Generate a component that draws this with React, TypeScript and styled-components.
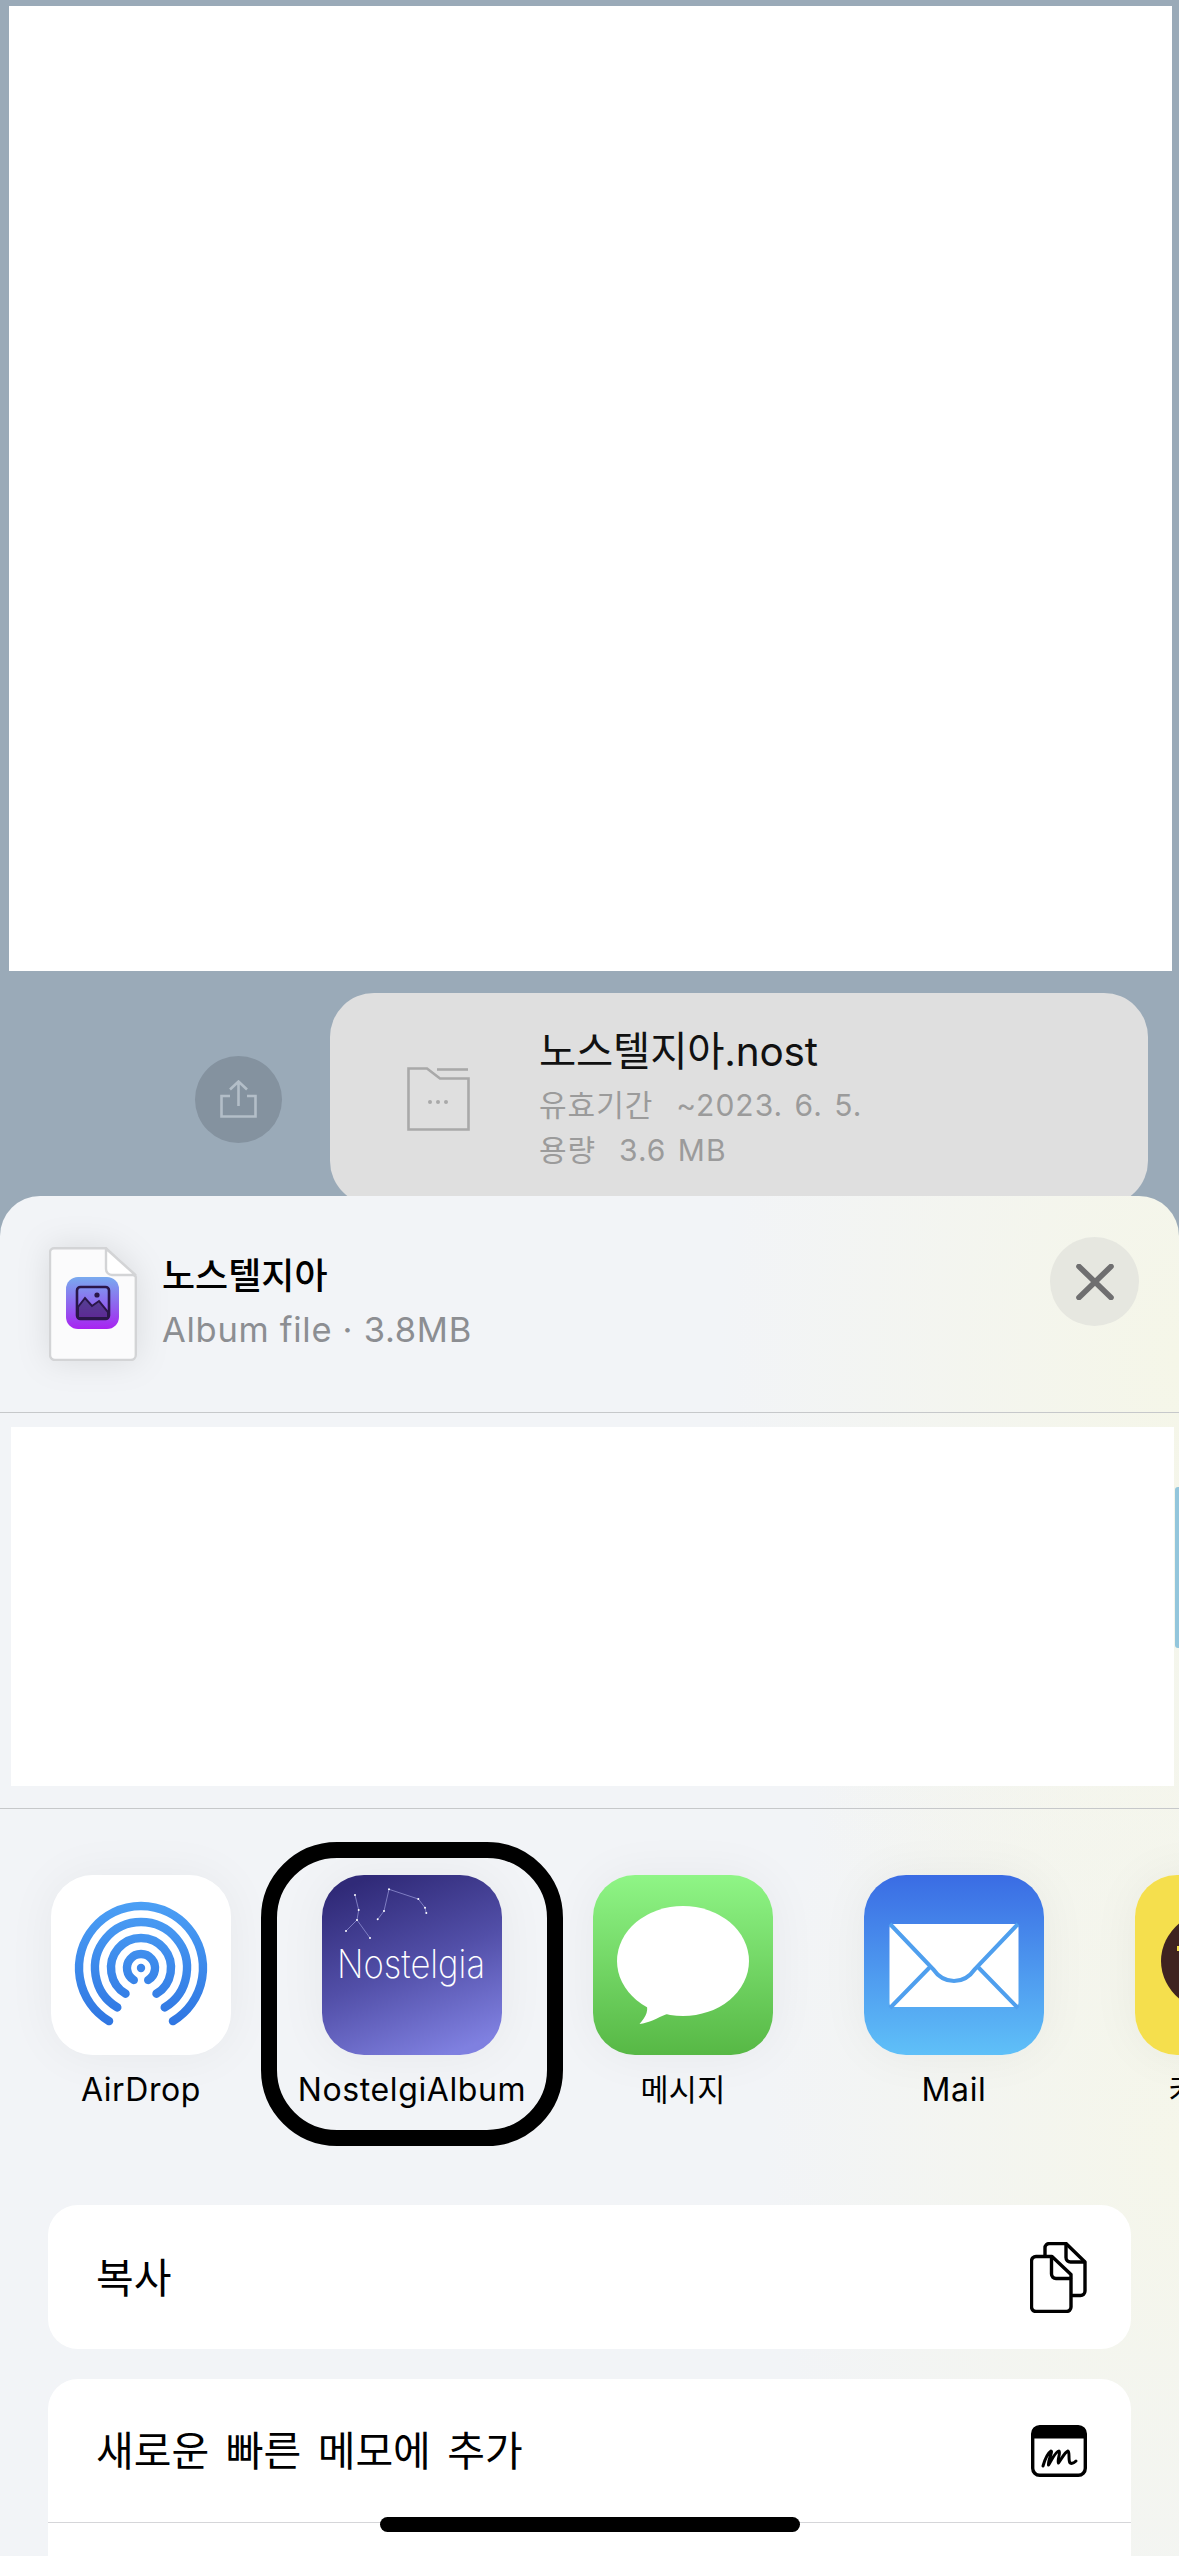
import React from "react";
import styled, { createGlobalStyle } from "styled-components";

const FONT = `"Inter", "Noto Sans CJK KR", "Noto Sans", sans-serif`;

const Global = createGlobalStyle`
  html, body { margin: 0; padding: 0; background: #9aaab8; }
  * { box-sizing: border-box; }
`;

const Screen = styled.div`
  position: relative;
  width: 1179px;
  height: 2556px;
  overflow: hidden;
  background: #9aaab8;
  font-family: ${FONT};
`;

const Chat = styled.section`
  height: 1196px;
  padding: 6px 7px 0 9px;
  overflow: hidden;
`;

const Preview = styled.div`
  height: 965px;
  background: #ffffff;
`;

const MessageRow = styled.div`
  display: flex;
  align-items: center;
  margin-top: 22px;
  padding: 0 24px 0 186px;
  gap: 48px;
`;

const ShareCircle = styled.div`
  flex: none;
  width: 87px;
  height: 87px;
  border-radius: 50%;
  background: #84929f;
  display: flex;
  align-items: center;
  justify-content: center;
`;

const FileBubble = styled.div`
  flex: 1;
  height: 212px;
  border-radius: 44px;
  background: #dfdfdf;
  display: flex;
  padding: 36px 0 0 77px;
  gap: 69px;
`;

const FileGlyph = styled.svg`
  flex: none;
  margin-top: 38px;
`;

const FileMeta = styled.div`
  display: flex;
  flex-direction: column;
`;

const FileName = styled.div`
  font-size: 40.5px;
  line-height: 46px;
  color: #111;
  letter-spacing: -0.2px;
  margin-bottom: 8px;
`;

const FileSub = styled.div`
  font-size: 30px;
  line-height: 45px;
  color: #9b9b9b;
  white-space: pre;
  letter-spacing: 1px;
  word-spacing: 2px;
`;

const Sheet = styled.section`
  position: relative;
  height: 1360px;
  border-radius: 40px 40px 0 0;
  overflow: hidden;
  background:
    radial-gradient(ellipse 460px 800px at 100% 12%, #f5f6e8 0%, rgba(245, 246, 232, 0) 100%),
    radial-gradient(ellipse 420px 700px at 100% 70%, #f5f6ea 0%, rgba(245, 246, 234, 0) 100%),
    #f2f4f7;
`;

const SheetHeader = styled.header`
  height: 217px;
  display: flex;
  align-items: flex-start;
  padding: 41px 40px 0 49px;
  border-bottom: 1px solid #c6c8ca;
`;

const DocIcon = styled.svg`
  flex: none;
  margin-top: 10px;
  filter: drop-shadow(0 0 16px rgba(0, 0, 0, 0.1));
`;

const HeaderText = styled.div`
  flex: 1;
  margin-left: 25px;
  padding-top: 16px;
`;

const SheetTitle = styled.div`
  font-size: 36px;
  line-height: 46px;
  font-weight: 500;
  color: #000;
`;

const SheetSub = styled.div`
  font-size: 34.5px;
  line-height: 44px;
  letter-spacing: 0.7px;
  color: #8c8e92;
  margin-top: 9px;
`;

const CloseButton = styled.div`
  flex: none;
  width: 89px;
  height: 89px;
  border-radius: 50%;
  background: #e6e7e0;
  display: flex;
  align-items: center;
  justify-content: center;
`;

const PeopleArea = styled.div`
  position: relative;
  height: 396px;
  padding: 14px 5px 0 11px;
  border-bottom: 1px solid #c6c8ca;
`;

const PeopleBlank = styled.div`
  height: 359px;
  background: #ffffff;
`;

const ScrollThumb = styled.div`
  position: absolute;
  top: 74px;
  right: 0;
  width: 4px;
  height: 161px;
  border-radius: 3px 0 0 3px;
  background: #93c6dc;
`;

const AppRow = styled.div`
  display: flex;
  gap: 91px;
  padding: 66px 0 0 51px;
  height: 396px;
`;

const AppItem = styled.div`
  position: relative;
  flex: none;
  width: 180px;
  display: flex;
  flex-direction: column;
  align-items: center;
`;

const AppIcon = styled.svg`
  display: block;
  flex: none;
  border-radius: 42px;
  box-shadow: 0 0 50px rgba(0, 0, 0, 0.05);
`;

const AppLabel = styled.div<{ $hangul?: boolean }>`
  font-size: ${(p) => (p.$hangul ? "30.5px" : "32px")};
  letter-spacing: ${(p) => (p.$hangul ? "0.2px" : "0.6px")};
  line-height: 40px;
  margin-top: 15px;
  color: #000;
  white-space: nowrap;
`;

const FocusRing = styled.div`
  position: absolute;
  top: -33px;
  left: -61px;
  width: 302px;
  height: 304px;
  border: 16px solid #000;
  border-radius: 76px;
  pointer-events: none;
`;

const ActionGroup = styled.div`
  margin: 0 48px 30px;
  border-radius: 30px;
  background: #ffffff;
  overflow: hidden;
`;

const ActionRow = styled.div<{ $height: number }>`
  height: ${(p) => p.$height}px;
  display: flex;
  align-items: center;
  justify-content: space-between;
  padding: 0 44px 5px 48px;
  font-size: 41px;
  color: #000;
  word-spacing: 5px;
  & + & {
    border-top: 1px solid #d5d6d9;
  }
`;

const GlyphSlot = styled.span`
  display: flex;
  margin-top: 5px;
`;

const HomeBar = styled.div`
  position: absolute;
  left: 380px;
  bottom: 24px;
  width: 420px;
  height: 15px;
  border-radius: 8px;
  background: #000;
`;

const ShareGlyph = () => (
  <svg width="37" height="38" viewBox="0 0 37 38" fill="none" stroke="#b3bec8" strokeWidth="2.6">
    <path d="M18.5 26V2M10 9.5 18.5 1.5 27 9.5" />
    <path d="M10 16H1.5V36.5H35.5V16H27" />
  </svg>
);

const FolderGlyph = () => (
  <FileGlyph width="63" height="64" viewBox="0 0 63 64" fill="none" stroke="#a9a9a9" strokeWidth="2.6">
    <path d="M1.5 62.5V1.5H20L33 11.5H61.5V62.5Z" />
    <path d="M30 2.5H61" />
    <circle cx="23" cy="35" r="2" fill="#a9a9a9" stroke="none" />
    <circle cx="31" cy="35" r="2" fill="#a9a9a9" stroke="none" />
    <circle cx="39" cy="35" r="2" fill="#a9a9a9" stroke="none" />
  </FileGlyph>
);

const AlbumDoc = () => (
  <DocIcon width="88" height="114" viewBox="0 0 88 114" fill="none">
    <defs>
      <linearGradient id="docApp" x1="0" y1="0" x2="0" y2="1">
        <stop offset="0" stopColor="#79aaef" />
        <stop offset="0.55" stopColor="#8f63ee" />
        <stop offset="1" stopColor="#a823f1" />
      </linearGradient>
    </defs>
    <path d="M5 1.2H57L86.8 30V108a5 5 0 0 1-5 5H6a5 5 0 0 1-5-5V5a4 4 0 0 1 4-3.8Z" fill="#fbfbfc" stroke="#d3d4d6" strokeWidth="2.4" />
    <path d="M57 1.5V22a6 6 0 0 0 6 6H86.5Z" fill="#ffffff" stroke="#d3d4d6" strokeWidth="2.4" strokeLinejoin="round" />
    <rect x="17" y="30" width="53" height="52" rx="12" fill="url(#docApp)" />
    <rect x="28" y="40" width="32" height="32" rx="3.5" stroke="#2a1648" strokeWidth="2.6" />
    <path d="M29 60 36 51 43 59 50 54 59 65V71H29Z" fill="#2a1648" fillOpacity="0.55" stroke="#2a1648" strokeWidth="2" />
    <circle cx="48" cy="48" r="2.6" fill="#2a1648" />
  </DocIcon>
);

const CloseGlyph = () => (
  <svg width="38" height="36" viewBox="0 0 38 36" fill="none" stroke="#6f6f70" strokeWidth="5.6" strokeLinecap="round">
    <path d="M3 2.5 35 33.5M35 2.5 3 33.5" />
  </svg>
);

const rings = [62, 46, 30, 14];

const AirDropIcon = () => (
  <AppIcon width="180" height="180" viewBox="0 0 180 180">
    <defs>
      <linearGradient id="airStroke" gradientUnits="userSpaceOnUse" x1="90" y1="27" x2="90" y2="150">
        <stop offset="0" stopColor="#4b9ff5" />
        <stop offset="1" stopColor="#2f76e2" />
      </linearGradient>
    </defs>
    <rect width="180" height="180" fill="#ffffff" />
    {rings.map((r) => (
      <path
        key={r}
        d={`M${90 - r * 0.515} ${93 + r * 0.857}A${r} ${r} 0 1 1 ${90 + r * 0.515} ${93 + r * 0.857}`}
        fill="none"
        stroke="url(#airStroke)"
        strokeWidth="8.4"
        strokeLinecap="round"
      />
    ))}
    <circle cx="90" cy="93" r="4.2" fill="#3b86ea" />
  </AppIcon>
);

const stars: [number, number][] = [
  [33, 20], [36.7, 35], [35, 45], [24, 56], [48, 63],
  [55.7, 44.3], [62, 36], [67, 14.3], [96.3, 24], [103, 32.7], [104.3, 38],
];

const NostelgiaIcon = () => (
  <AppIcon width="180" height="180" viewBox="0 0 180 180">
    <defs>
      <linearGradient id="nostBg" x1="0.3" y1="0" x2="0.7" y2="1">
        <stop offset="0" stopColor="#302a78" />
        <stop offset="0.5" stopColor="#524fa8" />
        <stop offset="1" stopColor="#7f80e0" />
      </linearGradient>
    </defs>
    <rect width="180" height="180" fill="url(#nostBg)" />
    <g fill="none" stroke="#8f8fd0" strokeWidth="0.8">
      <path d="M33 20 36.7 35 35 45 24 56M35 45 48 63" />
      <path d="M55.7 44.3 62 36 67 14.3 96.3 24 103 32.7 104.3 38" />
    </g>
    {stars.map(([x, y]) => (
      <circle key={`${x}-${y}`} cx={x} cy={y} r="1" fill="#ffffff" />
    ))}
    <text
      x="15"
      y="103"
      fontFamily="Inter, sans-serif"
      fontWeight="200"
      fontSize="39"
      fill="#ffffff"
      textLength="148"
      lengthAdjust="spacingAndGlyphs"
    >
      Nostelgia
    </text>
  </AppIcon>
);

const MessagesIcon = () => (
  <AppIcon width="180" height="180" viewBox="0 0 180 180">
    <defs>
      <linearGradient id="msgBg" x1="0" y1="0" x2="0" y2="1">
        <stop offset="0" stopColor="#8ff586" />
        <stop offset="1" stopColor="#57b845" />
      </linearGradient>
    </defs>
    <rect width="180" height="180" fill="url(#msgBg)" />
    <ellipse cx="90" cy="86" rx="66" ry="55" fill="#ffffff" />
    <path d="M52 126C57 134 53 142 46.5 149C56 148 64 143 74 139Z" fill="#ffffff" />
  </AppIcon>
);

const MailIcon = () => (
  <AppIcon width="180" height="180" viewBox="0 0 180 180">
    <defs>
      <linearGradient id="mailBg" x1="0" y1="0" x2="0" y2="1">
        <stop offset="0" stopColor="#3a6ce4" />
        <stop offset="1" stopColor="#5fc0f8" />
      </linearGradient>
    </defs>
    <rect width="180" height="180" fill="url(#mailBg)" />
    <rect x="25.5" y="49" width="129" height="83" rx="4" fill="#ffffff" />
    <g fill="none" stroke="#4f9fee" strokeWidth="4">
      <path d="M26 49 69 94C80 110 100 110 111 94L154 49" />
      <path d="M67 91 26 133M113 91 154 133" />
    </g>
  </AppIcon>
);

const KakaoIcon = () => (
  <AppIcon width="180" height="180" viewBox="0 0 180 180">
    <rect width="180" height="180" fill="#f5df4d" />
    <ellipse cx="90" cy="86" rx="64" ry="54" fill="#3f2320" />
    <rect x="42" y="71" width="4" height="5" fill="#f5df4d" />
  </AppIcon>
);

const CopyGlyph = () => (
  <svg width="57" height="71" viewBox="0 0 57 71" fill="none" stroke="#000" strokeWidth="3.4" strokeLinejoin="round" strokeLinecap="round">
    <path d="M15 13V6a4.5 4.5 0 0 1 4.5-4.5H36L55 20V49a4.5 4.5 0 0 1-4.5 4.5H42.5" />
    <path d="M36 2V15.5a4.5 4.5 0 0 0 4.5 4.5H54.5" />
    <path d="M6 14.5H22L41 32.5V65a4.5 4.5 0 0 1-4.5 4.5H6A4.5 4.5 0 0 1 1.5 65V19A4.5 4.5 0 0 1 6 14.5Z" />
    <path d="M21.5 15V32a4.5 4.5 0 0 0 4.5 4.5H40.5" />
  </svg>
);

const MemoGlyph = () => (
  <svg width="56" height="52" viewBox="0 0 56 52" fill="none" stroke="#000" strokeLinecap="round" strokeLinejoin="round">
    <rect x="1.7" y="1.7" width="52.6" height="48.6" rx="7" strokeWidth="3.4" />
    <path d="M1.7 8.7A7 7 0 0 1 8.7 1.7H47.3A7 7 0 0 1 54.3 8.7V13H1.7Z" fill="#000" strokeWidth="1" />
    <path d="M12 41C14 34 17 28 20 26C22 26 17 35 17.5 40C21 34 25 26 28 26C30 27 26 35 27.5 38C31 33 34 27 37 26C39 27 37 35 39 38C41 39 43 38 45 36" strokeWidth="3" />
  </svg>
);

const apps = [
  { label: "AirDrop", icon: <AirDropIcon />, focused: false, hangul: false },
  { label: "NostelgiAlbum", icon: <NostelgiaIcon />, focused: true, hangul: false },
  { label: "메시지", icon: <MessagesIcon />, focused: false, hangul: true },
  { label: "Mail", icon: <MailIcon />, focused: false, hangul: false },
  { label: "카카오톡", icon: <KakaoIcon />, focused: false, hangul: true },
];

export default function App() {
  return (
    <Screen>
      <Global />
      <Chat>
        <Preview />
        <MessageRow>
          <ShareCircle>
            <ShareGlyph />
          </ShareCircle>
          <FileBubble>
            <FolderGlyph />
            <FileMeta>
              <FileName>노스텔지아.nost</FileName>
              <FileSub>유효기간  ~2023. 6. 5.</FileSub>
              <FileSub>용량  3.6 MB</FileSub>
            </FileMeta>
          </FileBubble>
        </MessageRow>
      </Chat>
      <Sheet>
        <SheetHeader>
          <AlbumDoc />
          <HeaderText>
            <SheetTitle>노스텔지아</SheetTitle>
            <SheetSub>Album file · 3.8MB</SheetSub>
          </HeaderText>
          <CloseButton>
            <CloseGlyph />
          </CloseButton>
        </SheetHeader>
        <PeopleArea>
          <PeopleBlank />
          <ScrollThumb />
        </PeopleArea>
        <AppRow>
          {apps.map((a) => (
            <AppItem key={a.label}>
              {a.icon}
              <AppLabel $hangul={a.hangul}>{a.label}</AppLabel>
              {a.focused && <FocusRing />}
            </AppItem>
          ))}
        </AppRow>
        <ActionGroup>
          <ActionRow $height={144}>
            복사
            <GlyphSlot>
              <CopyGlyph />
            </GlyphSlot>
          </ActionRow>
        </ActionGroup>
        <ActionGroup>
          <ActionRow $height={143}>
            새로운 빠른 메모에 추가
            <GlyphSlot>
              <MemoGlyph />
            </GlyphSlot>
          </ActionRow>
          <ActionRow $height={100} />
        </ActionGroup>
      </Sheet>
      <HomeBar />
    </Screen>
  );
}
